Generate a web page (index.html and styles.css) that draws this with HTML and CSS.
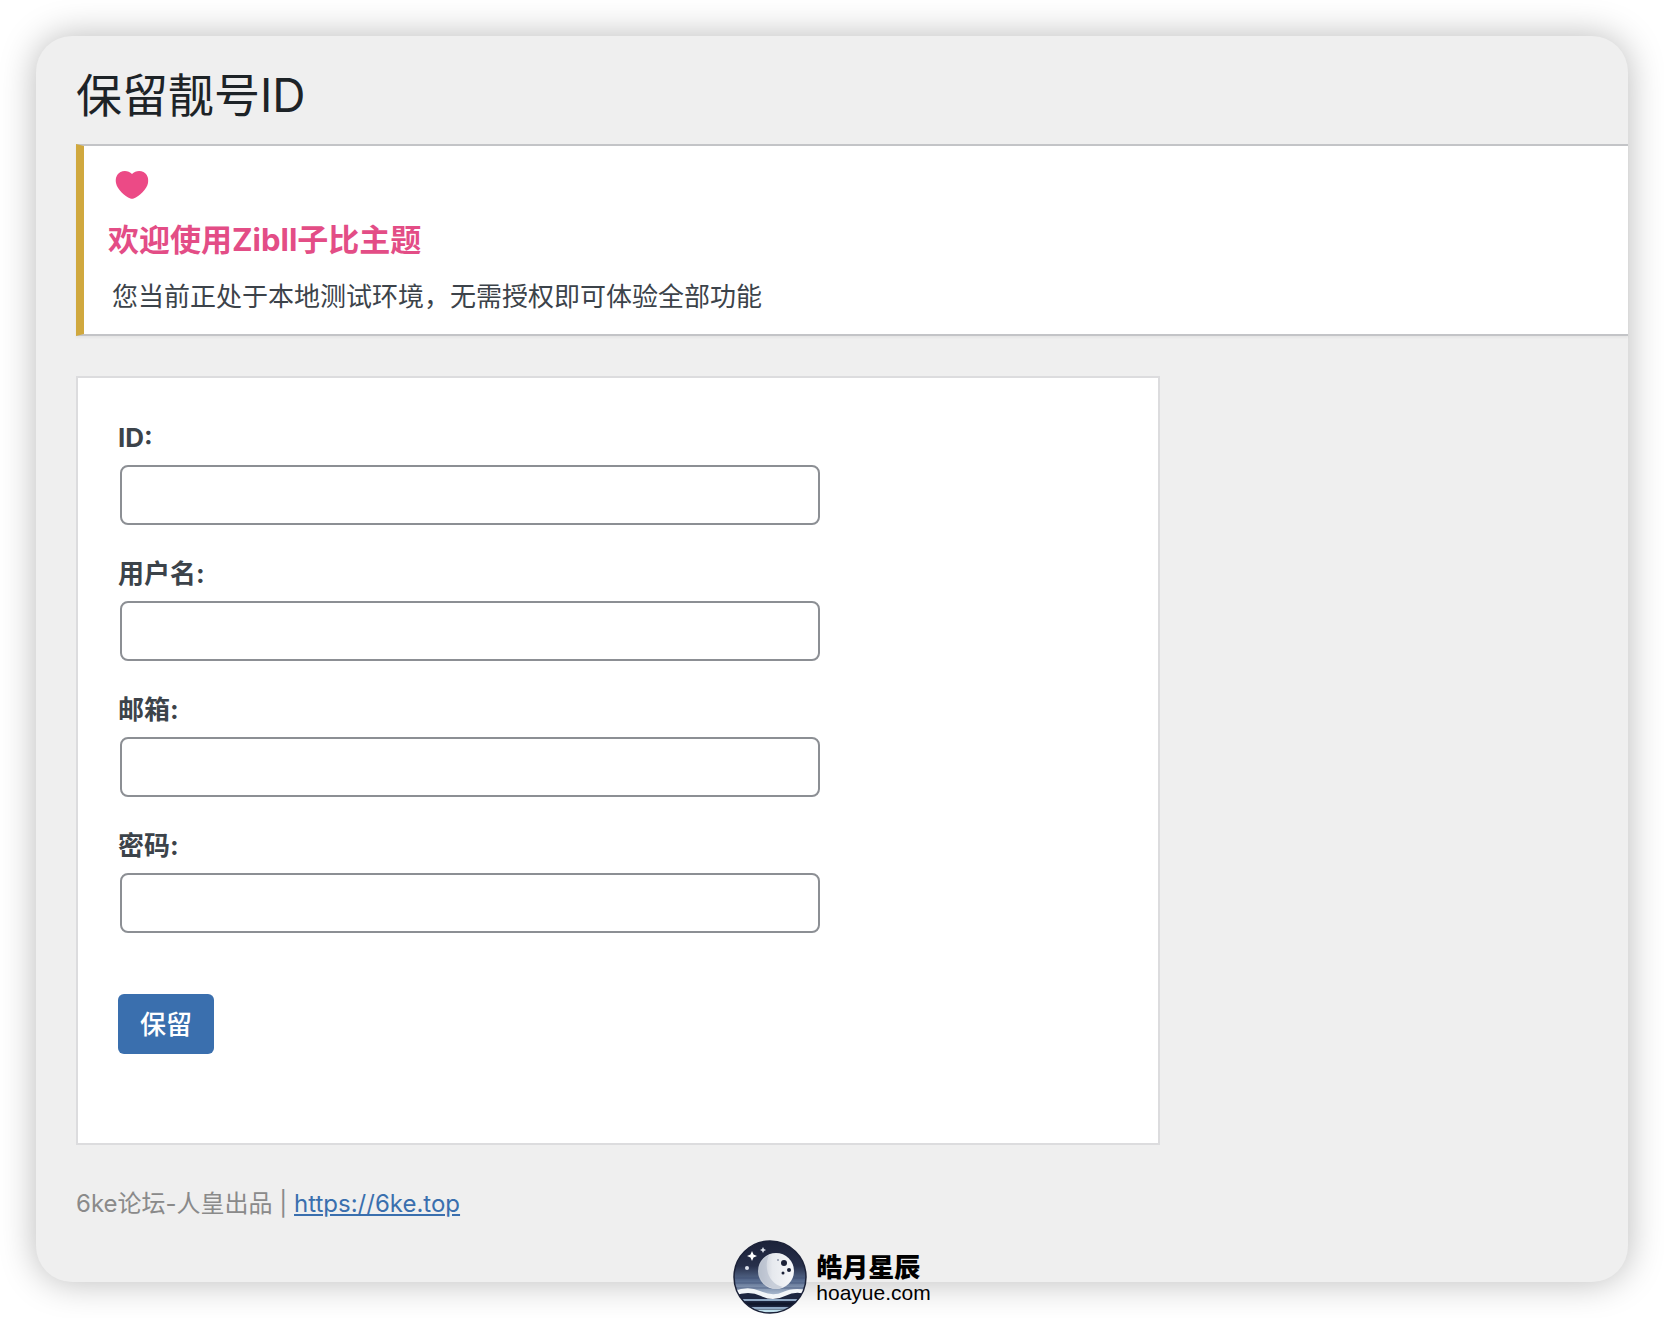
FILE: index.html
```html
<!DOCTYPE html>
<html lang="zh-CN">
<head>
<meta charset="utf-8">
<meta name="viewport" content="width=device-width, initial-scale=1">
<title>保留靓号ID</title>
<link rel="stylesheet" href="styles.css">
</head>
<body>
<div class="page">
  <main class="panel">
    <h1 class="title">保留靓号ID</h1>
    <section class="notice">
      <svg class="notice-icon" viewBox="0 0 40 40" aria-hidden="true">
        <path fill="#ec4a86" d="M20 9C23 5.700 28 5 31.500 7C35.500 9.200 36.800 13.500 36 18C34.800 24.500 27.500 31 21.600 33.500Q20 34.100 18.400 33.500C12.500 31 5.200 24.500 4 18C3.200 13.500 4.500 9.200 8.500 7C12 5 17 5.700 20 9Z"/>
      </svg>
      <h2 class="notice-title">欢迎使用Zibll子比主题</h2>
      <p class="notice-text">您当前正处于本地测试环境，无需授权即可体验全部功能</p>
    </section>
    <form class="card">
      <div class="field">
        <label for="uid">ID:</label>
        <input id="uid" name="uid" type="text">
      </div>
      <div class="field">
        <label for="username">用户名:</label>
        <input id="username" name="username" type="text">
      </div>
      <div class="field">
        <label for="email">邮箱:</label>
        <input id="email" name="email" type="email">
      </div>
      <div class="field">
        <label for="password">密码:</label>
        <input id="password" name="password" type="password">
      </div>
      <button class="submit" type="submit">保留</button>
    </form>
    <footer class="credit">6ke论坛-人皇出品 | <a href="https://6ke.top">https://6ke.top</a></footer>
  </main>
  <div class="brand">
    <svg class="brand-logo" viewBox="0 0 74 74" aria-hidden="true">
      <defs>
        <clipPath id="disc"><circle cx="37" cy="37" r="36"/></clipPath>
        <linearGradient id="sky" x1="0" y1="0" x2="0" y2="1">
          <stop offset="0" stop-color="#1b2138"/>
          <stop offset=".35" stop-color="#272f4a"/>
          <stop offset=".55" stop-color="#586c8f"/>
          <stop offset=".72" stop-color="#a3b3c9"/>
        </linearGradient>
        <linearGradient id="moon" x1="0" y1="0" x2="1" y2="0">
          <stop offset="0" stop-color="#b9c0cd"/>
          <stop offset=".4" stop-color="#e6e9ee"/>
          <stop offset="1" stop-color="#f7f8fa"/>
        </linearGradient>
      </defs>
      <g clip-path="url(#disc)">
        <rect width="74" height="74" fill="url(#sky)"/>
        <path d="M0 38H74M0 43H74M0 48H74" stroke="#3b4b70" stroke-width="1" opacity=".6"/>
        <circle cx="43" cy="31" r="18" fill="url(#moon)"/>
        <path d="M36 15A18 18 0 0 0 43 49A18 18 0 0 0 50 47C36 44 30 28 36 15Z" fill="#b4bccb" opacity=".6"/>
        <circle cx="51" cy="23" r="3" fill="#1c2238"/>
        <circle cx="56" cy="30" r="2" fill="#1c2238"/>
        <circle cx="50" cy="33" r="1.500" fill="#1c2238"/>
        <circle cx="45" cy="20" r="1" fill="#8c95a8"/>
        <path d="M0 52Q14 45 27 51T50 52T74 50V74H0Z" fill="#f2f5f8"/>
        <path d="M0 56Q16 50 28 56T52 56T74 55V74H0Z" fill="#1d2640"/>
        <path d="M0 60H74M10 68H64" stroke="#8fa8c4" stroke-width="2"/>
        <path d="M6 64H70" stroke="#10172c" stroke-width="3"/>
        <path d="M14 71H60" stroke="#c2e2ee" stroke-width="3"/>
        <path d="M19 11L20.500 14.500L24 16L20.500 17.500L19 21L17.500 17.500L14 16L17.500 14.500Z" fill="#fff"/>
        <path d="M30 7L31 9L33 10L31 11L30 13L29 11L27 10L29 9Z" fill="#dde2ec"/>
        <circle cx="14" cy="28" r="2" fill="#dde2ec"/>
      </g>
      <circle cx="37" cy="37" r="36" fill="none" stroke="#1b2138" stroke-width="1.500"/>
    </svg>
    <div class="brand-text">
      <span class="brand-name">皓月星辰</span>
      <span class="brand-site">hoayue.com</span>
    </div>
  </div>
</div>
</body>
</html>
```

FILE: styles.css
```css
*,
*::before,
*::after {
  box-sizing: border-box;
}

body {
  margin: 0;
  background: #fff;
  color: #3c434a;
  font-family: Inter, "Noto Sans CJK SC", sans-serif;
  font-size: 26px;
}

.page {
  position: relative;
  padding: 36px;
}

.panel {
  padding: 27px 0 60px 40px;
  border-radius: 36px;
  background: #efefef;
  box-shadow: 0 0 36px rgba(0, 0, 0, 0.28);
}

.title {
  margin: 0 0 17px;
  color: #1d2327;
  font-size: 46px;
  font-weight: 400;
  line-height: 64px;
}

.notice {
  margin-bottom: 40px;
  padding: 19px 24px 17px;
  border: 2px solid #c3c4c7;
  border-left: 8px solid #d0a83e;
  border-right: 0;
  background: #fff;
  box-shadow: 0 2px 2px rgba(0, 0, 0, 0.04);
}

.notice-icon {
  display: block;
  width: 40px;
  height: 40px;
  margin-left: 4px;
}

.notice-title {
  margin: 13px 0 15px;
  color: #e34d86;
  font-size: 31px;
  font-weight: 700;
  line-height: 44px;
}

.notice-text {
  margin: 0 4px;
  line-height: 40px;
}

.card {
  max-width: 1084px;
  padding: 40px 40px 89px;
  border: 2px solid #dcdcde;
  background: #fff;
}

.field {
  margin-bottom: 29px;
}

.field label {
  display: block;
  margin-bottom: 7px;
  font-weight: 700;
  line-height: 40px;
}

.field input {
  display: block;
  width: 70%;
  height: 60px;
  margin: 0 2px;
  padding: 0 16px;
  border: 2px solid #8c8f94;
  border-radius: 8px;
  background: #fff;
  color: inherit;
  font: inherit;
}

.submit {
  display: block;
  height: 60px;
  margin-top: 61px;
  padding: 0 22px 3px;
  border: 0;
  border-radius: 6px;
  background: #3a6fae;
  color: #fff;
  font: inherit;
  font-weight: 500;
}

.credit {
  margin-top: 41px;
  color: #8a8a8a;
  font-size: 24px;
  line-height: 36px;
}

.credit a {
  color: #3a6fae;
}

.brand {
  position: absolute;
  right: 0;
  bottom: 4px;
  left: 0;
  display: flex;
  justify-content: center;
  gap: 9px;
  color: #000;
}

.brand-logo {
  width: 74px;
  height: 74px;
}

.brand-text {
  display: flex;
  flex-direction: column;
  padding-top: 11px;
}

.brand-name {
  font-family: "Noto Sans CJK SC", sans-serif;
  font-size: 26px;
  font-weight: 900;
  line-height: 30px;
}

.brand-site {
  font-family: "Liberation Sans", Arial, sans-serif;
  font-size: 21px;
  line-height: 24px;
}
```
